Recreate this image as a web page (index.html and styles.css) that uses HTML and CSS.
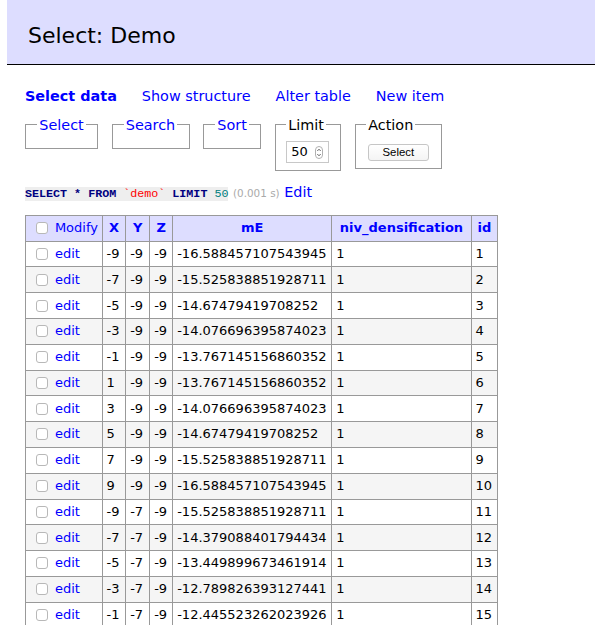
FILE: index.html
```html
<!DOCTYPE html>
<html>
<head>
<meta charset="utf-8">
<title>Select: Demo</title>
<link rel="stylesheet" href="styles.css">
</head>
<body>
<h2 class="title">Select: Demo</h2>
<div class="content">
  <p class="links">
    <a class="active" href="#">Select data</a>
    <a href="#">Show structure</a>
    <a href="#">Alter table</a>
    <a href="#">New item</a>
  </p>
  <form class="filters">
    <fieldset class="fs fs-select"><legend><a href="#">Select</a></legend></fieldset>
    <fieldset class="fs fs-search"><legend><a href="#">Search</a></legend></fieldset>
    <fieldset class="fs fs-sort"><legend><a href="#">Sort</a></legend></fieldset>
    <fieldset class="fs fs-tight"><legend>Limit</legend>
      <div class="num"><span class="num-val">50</span>
        <svg class="spin" width="8" height="13" viewBox="0 0 8 13"><rect x="0.5" y="0.5" width="7" height="12" rx="3.5" fill="#fff" stroke="#b0b0b0"/><path d="M2.3 5 L4 3.2 L5.7 5" fill="none" stroke="#555" stroke-width="0.9"/><path d="M2.3 8 L4 9.8 L5.7 8" fill="none" stroke="#555" stroke-width="0.9"/></svg>
      </div>
    </fieldset>
    <fieldset class="fs fs-tight"><legend>Action</legend>
      <button type="button" class="btn">Select</button>
    </fieldset>
  </form>
  <p class="sql"><code class="jush"><span class="kw">SELECT</span> <span class="kw">*</span> <span class="kw">FROM</span> <span class="bac">`demo`</span> <span class="kw">LIMIT</span> <span class="numlit">50</span></code> <span class="time">(0.001 s)</span> <a href="#">Edit</a></p>
  <table class="data">
    <colgroup>
      <col class="c-mod"><col class="c-x"><col class="c-y"><col class="c-z"><col class="c-me"><col class="c-niv"><col class="c-id">
    </colgroup>
    <thead>
      <tr><td class="mod"><input type="checkbox" class="cb"><a href="#">Modify</a></td><th><a href="#">X</a></th><th><a href="#">Y</a></th><th><a href="#">Z</a></th><th><a href="#">mE</a></th><th><a href="#">niv_densification</a></th><th><a href="#">id</a></th></tr>
    </thead>
    <tbody>
      <tr><td class="mod"><input type="checkbox" class="cb"><a href="#">edit</a></td><td>-9</td><td>-9</td><td>-9</td><td>-16.588457107543945</td><td>1</td><td>1</td></tr>
      <tr class="odd"><td class="mod"><input type="checkbox" class="cb"><a href="#">edit</a></td><td>-7</td><td>-9</td><td>-9</td><td>-15.525838851928711</td><td>1</td><td>2</td></tr>
      <tr><td class="mod"><input type="checkbox" class="cb"><a href="#">edit</a></td><td>-5</td><td>-9</td><td>-9</td><td>-14.67479419708252</td><td>1</td><td>3</td></tr>
      <tr class="odd"><td class="mod"><input type="checkbox" class="cb"><a href="#">edit</a></td><td>-3</td><td>-9</td><td>-9</td><td>-14.076696395874023</td><td>1</td><td>4</td></tr>
      <tr><td class="mod"><input type="checkbox" class="cb"><a href="#">edit</a></td><td>-1</td><td>-9</td><td>-9</td><td>-13.767145156860352</td><td>1</td><td>5</td></tr>
      <tr class="odd"><td class="mod"><input type="checkbox" class="cb"><a href="#">edit</a></td><td>1</td><td>-9</td><td>-9</td><td>-13.767145156860352</td><td>1</td><td>6</td></tr>
      <tr><td class="mod"><input type="checkbox" class="cb"><a href="#">edit</a></td><td>3</td><td>-9</td><td>-9</td><td>-14.076696395874023</td><td>1</td><td>7</td></tr>
      <tr class="odd"><td class="mod"><input type="checkbox" class="cb"><a href="#">edit</a></td><td>5</td><td>-9</td><td>-9</td><td>-14.67479419708252</td><td>1</td><td>8</td></tr>
      <tr><td class="mod"><input type="checkbox" class="cb"><a href="#">edit</a></td><td>7</td><td>-9</td><td>-9</td><td>-15.525838851928711</td><td>1</td><td>9</td></tr>
      <tr class="odd"><td class="mod"><input type="checkbox" class="cb"><a href="#">edit</a></td><td>9</td><td>-9</td><td>-9</td><td>-16.588457107543945</td><td>1</td><td>10</td></tr>
      <tr><td class="mod"><input type="checkbox" class="cb"><a href="#">edit</a></td><td>-9</td><td>-7</td><td>-9</td><td>-15.525838851928711</td><td>1</td><td>11</td></tr>
      <tr class="odd"><td class="mod"><input type="checkbox" class="cb"><a href="#">edit</a></td><td>-7</td><td>-7</td><td>-9</td><td>-14.379088401794434</td><td>1</td><td>12</td></tr>
      <tr><td class="mod"><input type="checkbox" class="cb"><a href="#">edit</a></td><td>-5</td><td>-7</td><td>-9</td><td>-13.449899673461914</td><td>1</td><td>13</td></tr>
      <tr class="odd"><td class="mod"><input type="checkbox" class="cb"><a href="#">edit</a></td><td>-3</td><td>-7</td><td>-9</td><td>-12.789826393127441</td><td>1</td><td>14</td></tr>
      <tr><td class="mod"><input type="checkbox" class="cb"><a href="#">edit</a></td><td>-1</td><td>-7</td><td>-9</td><td>-12.445523262023926</td><td>1</td><td>15</td></tr>
    </tbody>
  </table>
</div>
</body>
</html>
```
FILE: styles.css
```css
html, body {
  margin: 0;
  padding: 0;
  background: #fff;
}
body {
  font-family: "DejaVu Sans", Verdana, sans-serif;
  font-size: 14.4px;
  line-height: 18px;
  color: #000;
}
a {
  color: #00f;
  text-decoration: none;
}
.title {
  margin: 0 0 0 7px;
  padding: 22px 0 15px 21px;
  font-size: 22px;
  line-height: 27px;
  font-weight: normal;
  background: #ddf;
  border-bottom: 1px solid #000;
}
.content {
  padding: 0 0 0 25px;
}
.links {
  display: flex;
  gap: 25px;
  margin: 21.7px 0 0 0;
  white-space: nowrap;
}
.links .active {
  font-weight: bold;
}
.filters {
  display: flex;
  align-items: flex-start;
  gap: 13.5px;
  margin: 11.3px 0 0 0;
}
.fs {
  margin: 0;
  padding: 0 11.3px 7.2px 11.3px;
  border: 1px solid #999;
  min-width: 0;
}
.fs-tight {
  padding-left: 10.7px;
  padding-right: 10.7px;
}
.fs legend {
  padding: 0 2px;
  line-height: 18px;
}
.fs-select, .fs-search, .fs-sort {
  padding-bottom: 14.4px;
}
.num {
  margin-top: 7.2px;
  height: 20px;
  border: 1px solid #c8c8c8;
  display: flex;
  align-items: center;
  justify-content: space-between;
  padding: 0 5px 0 4px;
  box-sizing: content-box;
  width: 32px;
  font-size: 13px;
}
.num-val {
  line-height: 16px;
}
.spin {
  display: block;
}
.btn {
  display: block;
  margin: 10px 1.6px 0 1.6px;
  width: 61px;
  height: 17px;
  padding: 0;
  border: 1px solid #c6c6c6;
  border-radius: 3px;
  background: linear-gradient(#fff, #f4f4f4);
  font-family: "Liberation Sans", Arial, sans-serif;
  font-size: 11.4px;
  line-height: 15px;
  color: #000;
}
.sql {
  margin: 11.7px 0 0 0;
  white-space: nowrap;
}
.jush {
  font-family: "Liberation Mono", "Courier New", monospace;
  font-size: 11.7px;
  background: #eee;
  color: #000;
}
.jush .kw {
  color: #000080;
  font-weight: bold;
}
.jush .bac {
  color: #f00;
}
.jush .numlit {
  color: #008080;
}
.time {
  color: #aaa;
  font-size: 10.4px;
}
.data {
  margin: 12px 0 0 0;
  border-collapse: collapse;
  table-layout: fixed;
  width: 472.3px;
  font-size: 13px;
  line-height: 16.25px;
}
.c-mod { width: 76.7px; }
.c-x { width: 23.6px; }
.c-y { width: 24px; }
.c-z { width: 23px; }
.c-me { width: 159px; }
.c-niv { width: 139.4px; }
.c-id { width: 26.6px; }
.data tr {
  height: 25.8px;
}
.data thead tr {
  height: 25.6px;
}
.data td, .data th {
  border: 1px solid #999;
  padding: 2.8px 3.9px;
  white-space: nowrap;
  overflow: hidden;
  vertical-align: middle;
}
.data thead td, .data thead th {
  background: #ddf;
}
.data th {
  font-weight: bold;
  text-align: center;
}
.data tr.odd td {
  background: #f5f5f5;
}
.cb {
  -webkit-appearance: none;
  appearance: none;
  width: 12px;
  height: 12px;
  margin: 0 7px 0 6px;
  border: 1px solid #b8b8b8;
  border-radius: 3px;
  background: #fff;
  vertical-align: -2px;
  box-sizing: border-box;
}
```
